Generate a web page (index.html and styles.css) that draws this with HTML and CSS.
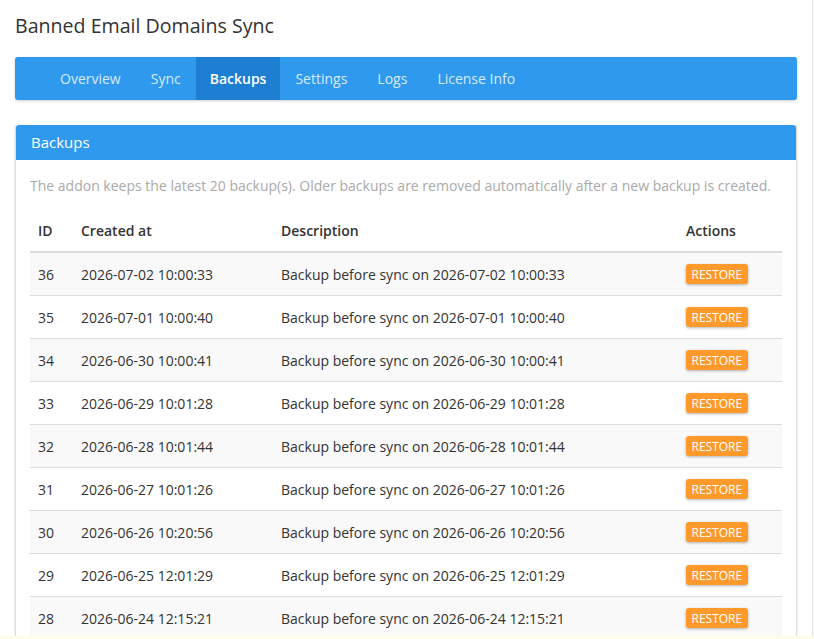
FILE: index.html
```html
<!DOCTYPE html>
<html lang="en">
<head>
    <meta charset="UTF-8">
    <meta name="viewport" content="width=device-width, initial-scale=1.0">
    <title>Banned Email Domains Sync</title>
    <link rel="stylesheet" href="styles.css">
</head>
<body>
    <div class="page">
        <h1 class="title">Banned Email Domains Sync</h1>

        <nav class="tabs">
            <a href="#">Overview</a>
            <a href="#">Sync</a>
            <a href="#" class="active">Backups</a>
            <a href="#">Settings</a>
            <a href="#">Logs</a>
            <a href="#">License Info</a>
        </nav>

        <div class="panel">
            <div class="panel-heading">Backups</div>
            <div class="panel-body">
                <p class="hint">The addon keeps the latest 20 backup(s). Older backups are removed automatically after a new backup is created.</p>
                <table class="backups">
                    <thead>
                        <tr>
                            <th class="col-id">ID</th>
                            <th class="col-date">Created at</th>
                            <th class="col-desc">Description</th>
                            <th class="col-act">Actions</th>
                        </tr>
                    </thead>
                    <tbody>
                        <tr><td>36</td><td>2026-07-02 10:00:33</td><td>Backup before sync on 2026-07-02 10:00:33</td><td><button class="btn-restore">Restore</button></td></tr>
                        <tr><td>35</td><td>2026-07-01 10:00:40</td><td>Backup before sync on 2026-07-01 10:00:40</td><td><button class="btn-restore">Restore</button></td></tr>
                        <tr><td>34</td><td>2026-06-30 10:00:41</td><td>Backup before sync on 2026-06-30 10:00:41</td><td><button class="btn-restore">Restore</button></td></tr>
                        <tr><td>33</td><td>2026-06-29 10:01:28</td><td>Backup before sync on 2026-06-29 10:01:28</td><td><button class="btn-restore">Restore</button></td></tr>
                        <tr><td>32</td><td>2026-06-28 10:01:44</td><td>Backup before sync on 2026-06-28 10:01:44</td><td><button class="btn-restore">Restore</button></td></tr>
                        <tr><td>31</td><td>2026-06-27 10:01:26</td><td>Backup before sync on 2026-06-27 10:01:26</td><td><button class="btn-restore">Restore</button></td></tr>
                        <tr><td>30</td><td>2026-06-26 10:20:56</td><td>Backup before sync on 2026-06-26 10:20:56</td><td><button class="btn-restore">Restore</button></td></tr>
                        <tr><td>29</td><td>2026-06-25 12:01:29</td><td>Backup before sync on 2026-06-25 12:01:29</td><td><button class="btn-restore">Restore</button></td></tr>
                        <tr><td>28</td><td>2026-06-24 12:15:21</td><td>Backup before sync on 2026-06-24 12:15:21</td><td><button class="btn-restore">Restore</button></td></tr>
                    </tbody>
                </table>
            </div>
        </div>
    </div>
    <div class="footer-strip"></div>
</body>
</html>
```

FILE: styles.css
```css
body {
    margin: 0;
    padding: 0;
    font-family: "Open Sans", "Noto Sans", sans-serif;
    font-size: 14px;
    color: #333;
    background-color: #fff;
    height: 639px;
    overflow: hidden;
    position: relative;
}
.page {
    width: 782px;
    padding: 0 15px;
    border-right: 1px solid #e3e3e3;
    margin-right: 3px;
    height: 636px;
    overflow: hidden;
}
.title {
    margin: 0;
    padding-top: 12px;
    height: 57px;
    box-sizing: border-box;
    font-size: 19.6px;
    font-weight: 400;
    line-height: 27px;
    color: #333;
}
.tabs {
    display: flex;
    height: 43px;
    padding-left: 30px;
    background-color: #2f99ee;
    border-radius: 3px;
    box-shadow: 0 1px 3px rgba(0, 0, 0, 0.2);
}
.tabs a {
    display: flex;
    align-items: center;
    padding: 0 15px;
    color: #d6ebfc;
    text-decoration: none;
    font-size: 14px;
}
.tabs a.active {
    padding: 0 14px;
    background-color: #1d7ed2;
    color: #fff;
    font-weight: 600;
}
.panel {
    margin-top: 25px;
    border: 1px solid #ddd;
    border-top: 0;
    border-radius: 3px;
    box-shadow: 0 1px 3px rgba(0, 0, 0, 0.12);
}
.panel-heading {
    height: 35px;
    line-height: 35px;
    padding: 0 15px;
    background-color: #2f99ee;
    color: #fff;
    font-size: 15px;
    font-weight: 500;
    border-radius: 3px 3px 0 0;
}
.panel-body {
    padding: 0 14px;
}
.hint {
    margin: 0;
    padding: 16px 0 0;
    line-height: 20px;
    color: #aaa;
    font-size: 14px;
}
.backups {
    width: 100%;
    margin-top: 14px;
    border-collapse: collapse;
}
.backups th {
    text-align: left;
    font-weight: 600;
    height: 41px;
    padding: 0 8px;
    border-bottom: 2px solid #ddd;
}
.backups td {
    height: 42px;
    padding: 0 8px;
    border-bottom: 1px solid #ddd;
}
.backups tbody tr:nth-child(odd) {
    background-color: #f9f9f9;
}
.col-id { width: 27px; }
.col-date { width: 184px; }
.col-act { width: 88px; }
.btn-restore {
    font-family: inherit;
    font-size: 12px;
    text-transform: uppercase;
    color: #fff;
    background-color: #fe9a2b;
    border: 0;
    border-radius: 3px;
    height: 20px;
    padding: 0 5.5px;
    box-shadow: 0 1px 3px rgba(0, 0, 0, 0.3);
}
.footer-strip {
    position: absolute;
    left: 0;
    right: 0;
    bottom: 0;
    height: 3px;
    background-color: #fefde8;
}
```
